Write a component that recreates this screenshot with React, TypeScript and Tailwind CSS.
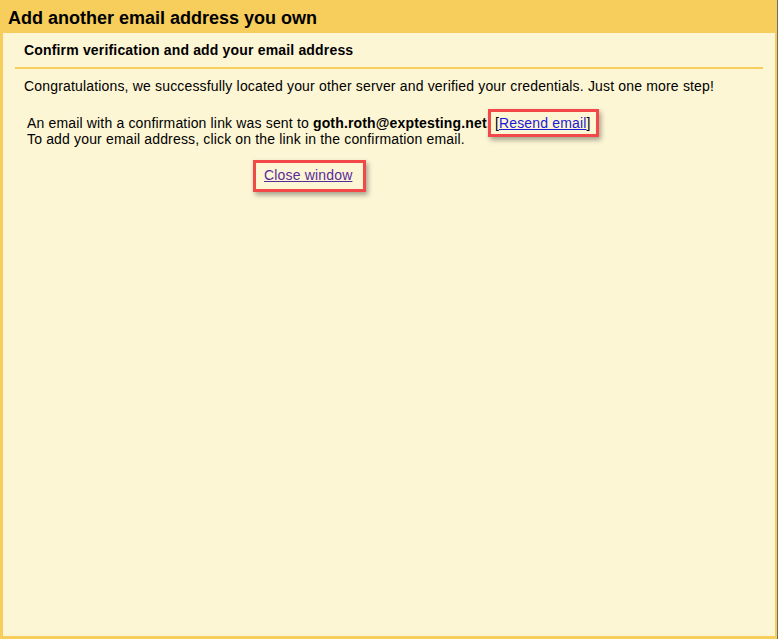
import React from "react";

export default function App() {
  const font = { fontFamily: '"Liberation Sans", Arial, sans-serif' };
  return (
    <div
      className="w-[778px] h-[639px] bg-[#f7ce5c] flex flex-col border-r border-[#6b6b6b] overflow-hidden"
      style={font}
    >
      <div className="h-[33px] shrink-0 pl-[8px] pt-[8px] text-[18px] leading-[20px] font-bold text-black">
        Add another email address you own
      </div>
      <div className="flex-1 ml-[3px] mr-[2px] mb-[3px] bg-[#fdf6d5] flex flex-col text-black">
        <div className="pt-[9px] pl-[21px] text-[14px] leading-[16px] font-bold tracking-[0.17px]">
          Confirm verification and add your email address
        </div>
        <div className="mt-[9px] ml-[12px] mr-[12px] h-[2px] bg-[#f7ce5c]" />
        <div className="mt-[9px] pl-[21px] text-[14px] leading-[16px] tracking-[0.17px]">
          Congratulations, we successfully located your other server and verified your credentials. Just one more step!
        </div>
        <div className="mt-[21px] pl-[24px] text-[14px] leading-[16px] tracking-[0.16px]">
          <div>
            An email with a confirmation link was sent to{" "}
            <span className="font-bold">goth.roth@exptesting.net</span>.{" "}
            <span className="relative">
              [<a href="#" className="underline text-[#1a1ad6]">Resend email</a>]
              <span className="absolute -left-[7px] -right-[8px] -top-[6px] -bottom-[6px] border-[3px] border-[#f24848] shadow-[2px_3px_5px_rgba(0,0,0,0.35)] pointer-events-none" />
            </span>
          </div>
          <div>To add your email address, click on the link in the confirmation email.</div>
        </div>
        <div className="mt-[20px] pl-[261px] text-[14px] leading-[16px] tracking-[0.17px]">
          <span className="relative">
            <a href="#" className="underline text-[#5a2a9a]">Close window</a>
            <span className="absolute -left-[11px] -right-[14px] -top-[7px] -bottom-[9px] border-[3px] border-[#f24848] shadow-[2px_3px_5px_rgba(0,0,0,0.35)] pointer-events-none" />
          </span>
        </div>
      </div>
    </div>
  );
}
